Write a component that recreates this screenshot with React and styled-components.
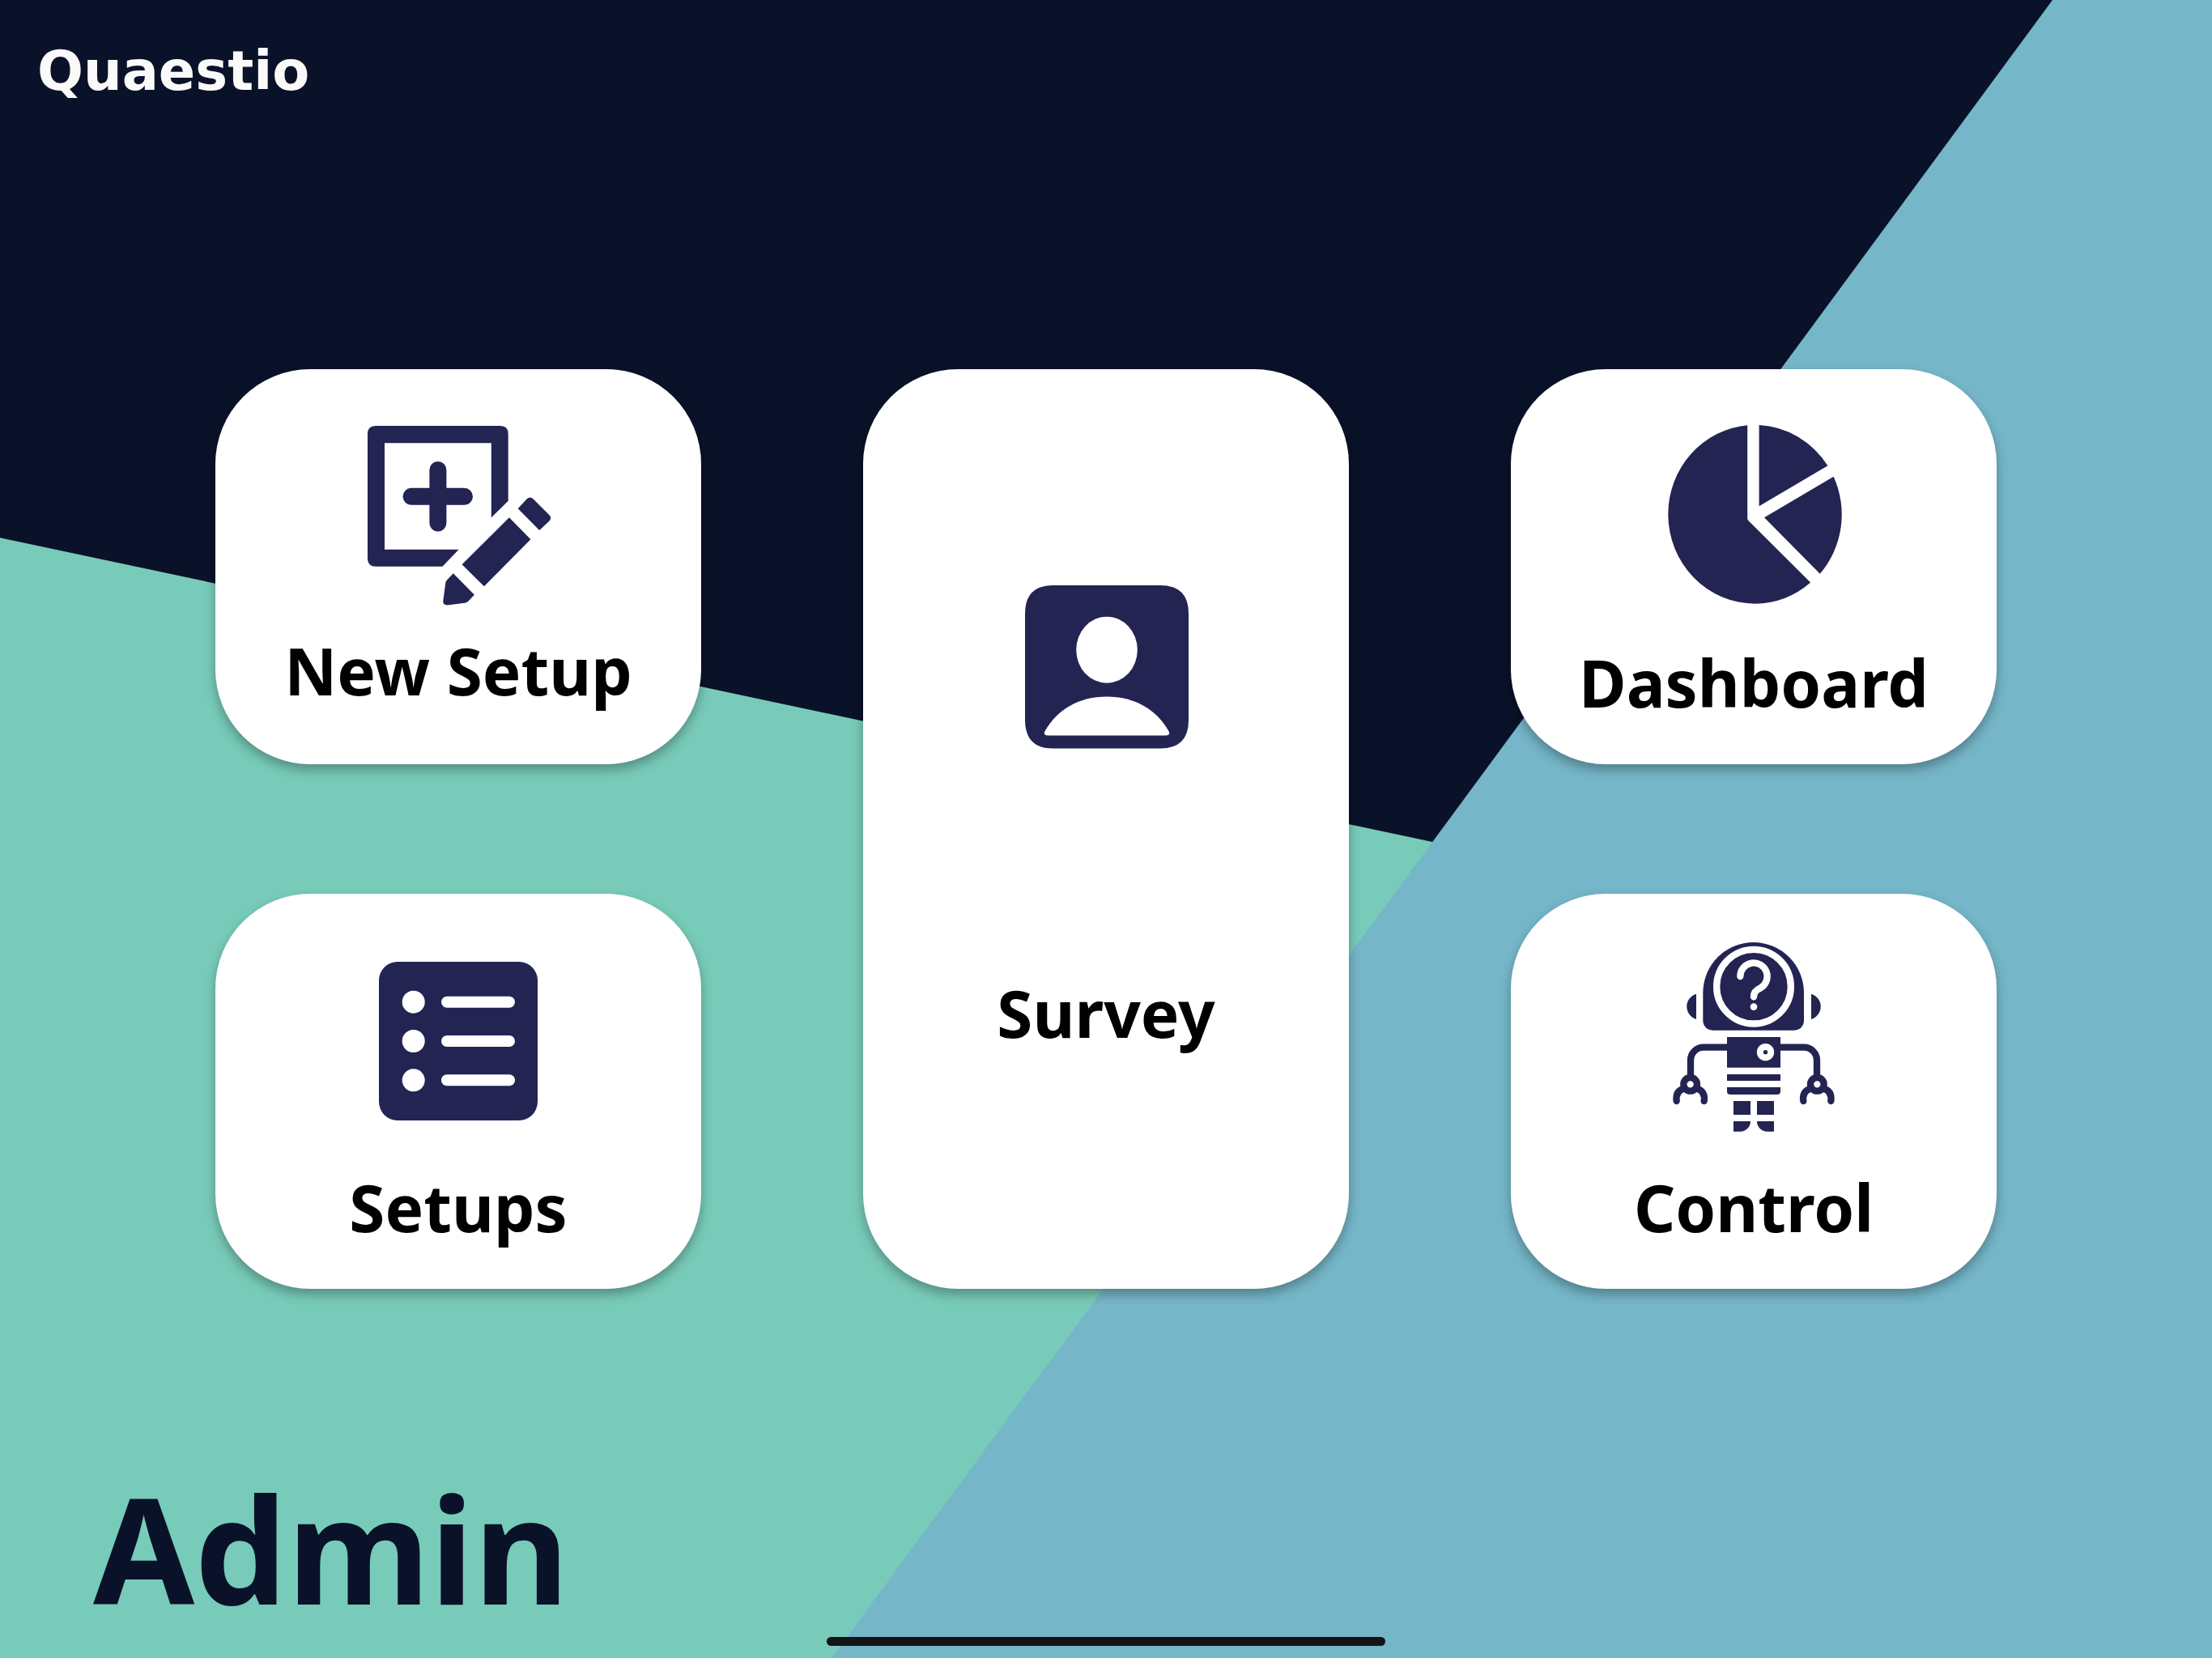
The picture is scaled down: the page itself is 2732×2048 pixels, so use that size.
import React from "react";
import styled, { createGlobalStyle } from "styled-components";

const navy = "#0a1229";
const green = "#78cbb9";
const blue = "#75b6c8";
const ink = "#232452";

const GlobalStyle = createGlobalStyle`
  * { box-sizing: border-box; }
  body {
    margin: 0;
    background: ${navy};
    font-family: "Noto Sans", "Open Sans", sans-serif;
  }
`;

const Page = styled.div`
  position: relative;
  isolation: isolate;
  display: grid;
  grid-template-rows: 1fr auto 1fr;
  min-height: 100vh;
  background: ${navy};
  overflow: hidden;

  &::before,
  &::after {
    content: "";
    position: absolute;
    inset: 0;
    z-index: -1;
  }
  &::before {
    background: ${green};
    clip-path: polygon(0 32.43%, 100% 60.77%, 100% 100%, 0 100%);
  }
  &::after {
    background: ${blue};
    clip-path: polygon(92.79% 0, 100% 0, 100% 100%, 37.59% 100%);
  }
`;

const Header = styled.header`
  padding: 48px 46px 0;
`;

const Wordmark = styled.a`
  display: inline-block;
  color: #fafafa;
  font-family: "DejaVu Sans", sans-serif;
  font-size: 67px;
  font-weight: 700;
  line-height: 80px;
  text-decoration: none;
`;

const Menu = styled.main`
  display: grid;
  grid-template-columns: repeat(3, 1fr);
  grid-template-rows: repeat(2, auto);
  grid-auto-flow: column;
  gap: 160px 200px;
  padding: 0 266px;
`;

const Tile = styled.button`
  display: flex;
  flex-direction: column;
  align-items: center;
  justify-content: flex-start;
  gap: ${(p) => p.$gap}px;
  grid-row: ${(p) => (p.$tall ? "span 2" : "auto")};
  min-height: 488px;
  padding: ${(p) => p.$top}px 0 0;
  border: 0;
  border-radius: 117px;
  background: #fff;
  box-shadow: 0 7px 14px rgba(0, 0, 0, 0.3);
  color: #000;
  font-family: inherit;
  cursor: pointer;
`;

const TileLabel = styled.span`
  font-size: 80px;
  font-weight: 700;
  line-height: 110px;
  white-space: nowrap;
`;

const Icon = styled.svg`
  display: block;
  flex: none;
  width: 256px;
  height: 256px;
  color: ${ink};
  fill: currentColor;
`;

const Footer = styled.footer`
  align-self: end;
  padding: 0 115px 14px;
`;

const Title = styled.h1`
  margin: 0;
  color: ${navy};
  font-size: 181px;
  font-weight: 700;
  line-height: 244px;
`;

const HomeIndicator = styled.div`
  position: absolute;
  bottom: 15px;
  left: 50%;
  width: 690px;
  height: 11px;
  border-radius: 6px;
  background: #141414;
  transform: translateX(-50%);
`;

function NewSetupIcon() {
  return (
    <Icon viewBox="0 0 256 256" aria-hidden="true">
      <path d="M26 9H180Q189.700 9 189.700 19V101.700L168.800 122.300V30.300H37V161.700H128.600L108.500 182.700H26Q16 182.700 16 172.700V19Q16 9 26 9Z" />
      <path
        d="M70 96.300H135.500M102.900 63.500V129"
        fill="none"
        stroke="currentColor"
        strokeWidth="21"
        strokeLinecap="round"
      />
      <path d="M190.900 122.300L217.400 149.300L159.900 207.300L132.600 180.300Z" />
      <path d="M201.700 111.300L212.500 99.500Q216.600 95.500 220.700 99.500L240 118.800Q244.300 123 240 127L228.200 138Z" />
      <path d="M121.800 191.300L147.900 217.700L140.500 225.500Q139 227.300 136 227.700L114.500 230.400Q109 230.400 109.300 225.500L112.300 203Q112.600 201 114 199.500Z" />
    </Icon>
  );
}

function SetupsIcon() {
  return (
    <Icon viewBox="0 0 256 256" aria-hidden="true">
      <rect x="30" y="38" width="196" height="196" rx="23" />
      {[87.7, 136, 184.3].map((y) => (
        <g key={y} fill="#fff">
          <circle cx="72.700" cy={y} r="14" />
          <rect x="107" y={y - 7} width="91" height="14" rx="7" />
        </g>
      ))}
    </Icon>
  );
}

function SurveyIcon() {
  return (
    <Icon viewBox="0 0 256 256" aria-hidden="true">
      <path d="M63 27H195Q230 27 230 62V193.500Q230 228.500 195 228.500H63Q28 228.500 28 193.500V62Q28 27 63 27Z" />
      <g fill="#fff">
        <ellipse cx="129" cy="106.700" rx="37.800" ry="41" />
        <path d="M129 164.600C95 164.600 68 180 52.300 207.500Q50 212.500 57 212.500H201Q208 212.500 205.700 207.500C190 180 163 164.600 129 164.600Z" />
      </g>
    </Icon>
  );
}

function DashboardIcon() {
  return (
    <Icon viewBox="0 0 256 256" aria-hidden="true">
      <path d="M120.200 23.200V138Q120.200 140 121.800 141.500L198.100 217.500A107.500 110.500 0 0 1 129.600 243.700A107.500 110.500 0 0 1 22.300 133.200A107.500 110.500 0 0 1 120.200 23.200Z" />
      <path d="M134.600 23A107.500 110.500 0 0 1 219.400 73.300L134.600 123.300Z" />
      <path d="M226.600 86.700A107.500 110.500 0 0 1 209.800 206.700L141 137.300Z" />
    </Icon>
  );
}

function RobotArm() {
  return (
    <g fill="none" stroke="currentColor" strokeWidth="25">
      <path d="M282 461H192A48 48 0 0 0 144 509V574" />
      <circle cx="143" cy="598" r="25" />
      <path
        d="M118 614C98 620 89 636 92 660M168 614C188 620 198 636 194 660"
        strokeLinecap="round"
      />
    </g>
  );
}

function ControlIcon() {
  return (
    <Icon viewBox="-6 30 768 768" aria-hidden="true">
      <path d="M190 259A187 187 0 0 1 564 259V362A36 36 0 0 1 528 398H226A36 36 0 0 1 190 362Z" />
      <g fill="none" stroke="#fff" strokeWidth="25" strokeLinecap="round">
        <circle cx="378" cy="236" r="137.500" />
        <path d="M328 198A50 50 0 1 1 402 242Q378 252 378 274" />
      </g>
      <circle cx="378" cy="311" r="13" fill="#fff" />
      <path d="M165 263A49 49 0 0 0 165 357Z" />
      <path d="M591 263A49 49 0 0 1 591 357Z" />
      <path d="M279 423H477V536H279Z" />
      <circle cx="421.500" cy="479" r="32" fill="#fff" />
      <circle cx="421.500" cy="479" r="8" />
      <path d="M279 561H477V585H279Z" />
      <path d="M279 609H477V624A12 12 0 0 1 465 636H291A12 12 0 0 1 279 624Z" />
      <path d="M303 660H366V711H303ZM390 660H453V711H390Z" />
      <path d="M303 735H366A38 38 0 0 1 328 773H303ZM453 735H390A38 38 0 0 0 428 773H453Z" />
      <RobotArm />
      <g transform="translate(756 0) scale(-1 1)">
        <RobotArm />
      </g>
    </Icon>
  );
}

const tiles = [
  { label: "New Setup", icon: NewSetupIcon, top: 61, gap: 0 },
  { label: "Setups", icon: SetupsIcon, top: 46, gap: 30 },
  { label: "Survey", icon: SurveyIcon, top: 240, gap: 244, tall: true },
  { label: "Dashboard", icon: DashboardIcon, top: 46, gap: 30 },
  { label: "Control", icon: ControlIcon, top: 46, gap: 30 },
];

export default function App() {
  return (
    <>
      <GlobalStyle />
      <Page>
        <Header>
          <Wordmark href="#">Quaestio</Wordmark>
        </Header>
        <Menu>
          {tiles.map(({ label, icon: TileIcon, top, gap, tall }) => (
            <Tile key={label} type="button" $top={top} $gap={gap} $tall={tall}>
              <TileIcon />
              <TileLabel>{label}</TileLabel>
            </Tile>
          ))}
        </Menu>
        <Footer>
          <Title>Admin</Title>
        </Footer>
        <HomeIndicator />
      </Page>
    </>
  );
}
